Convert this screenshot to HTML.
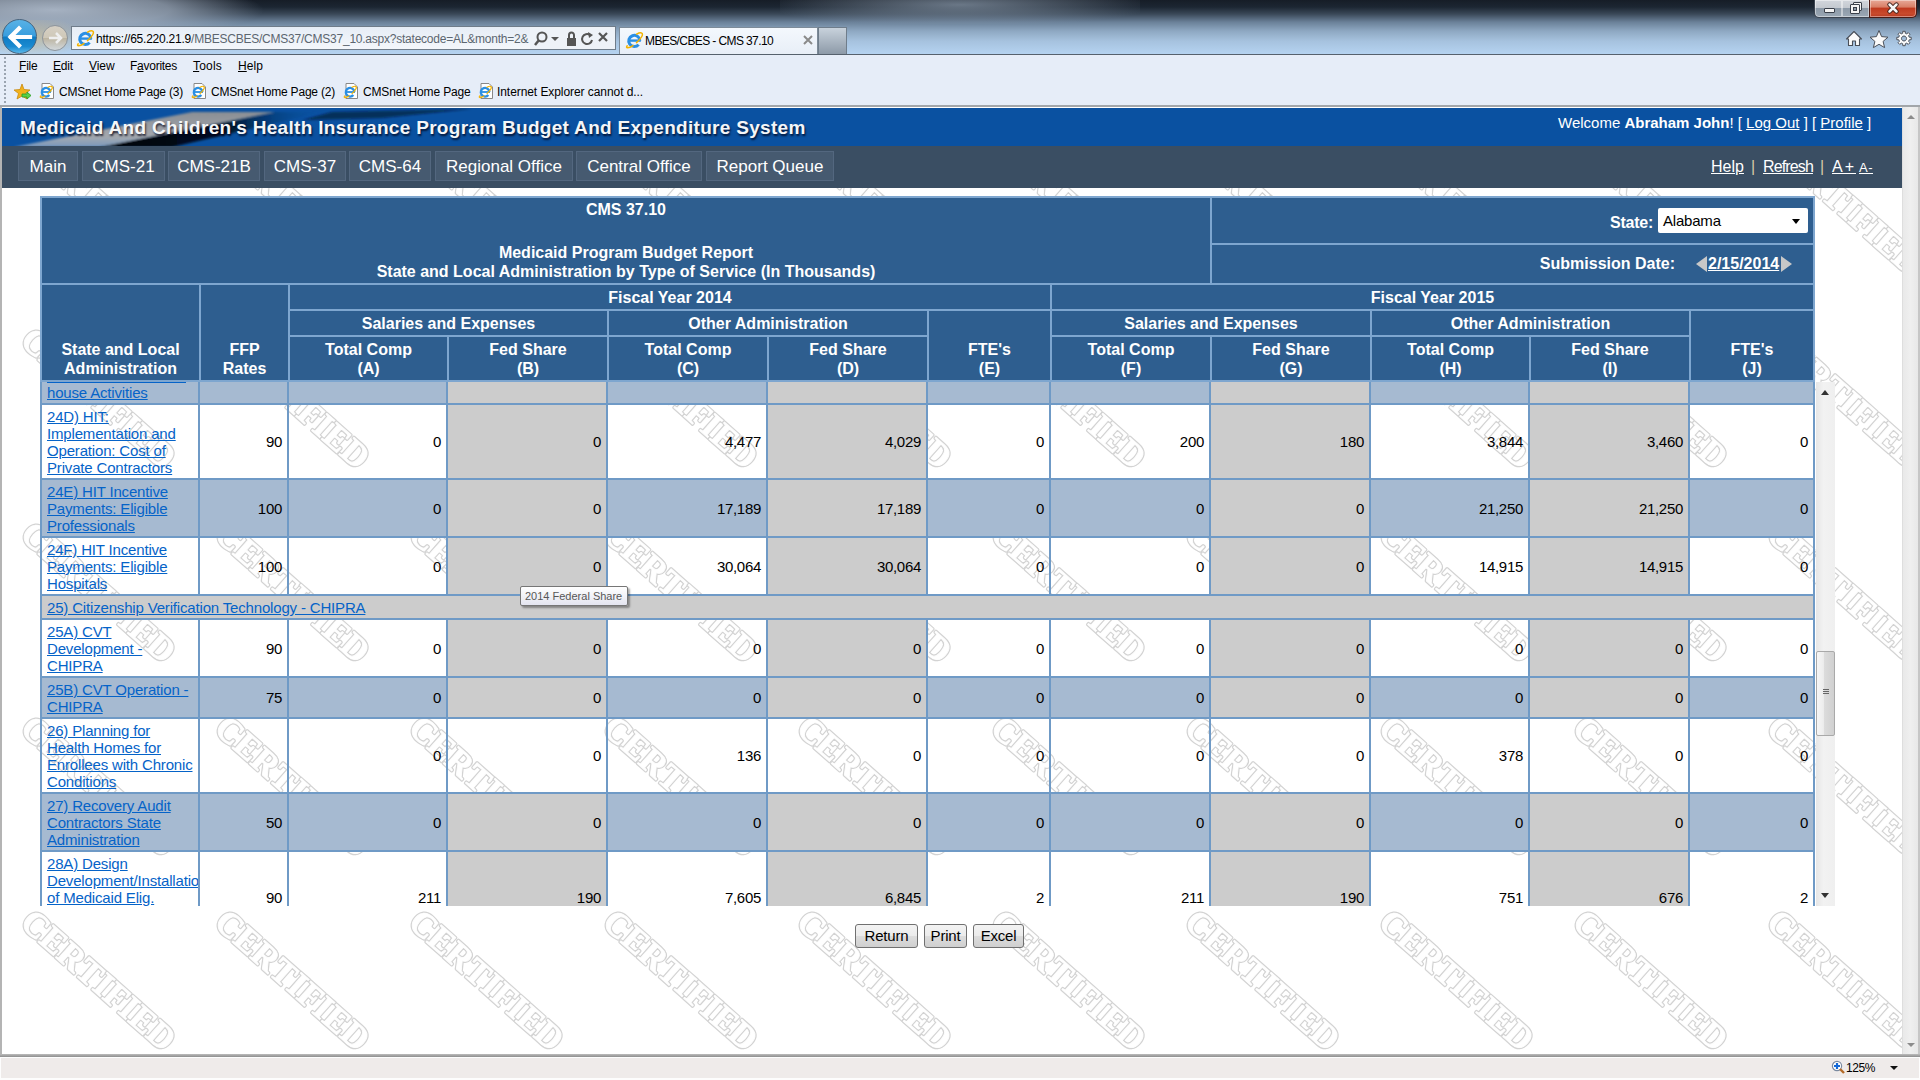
<!DOCTYPE html>
<html><head><meta charset="utf-8"><title>MBES/CBES - CMS 37.10</title>
<style>
html,body{margin:0;padding:0;}
body{width:1920px;height:1080px;overflow:hidden;position:relative;background:#fff;font-family:"Liberation Sans",sans-serif;}
body div{position:absolute;}
</style></head><body>
<div style="left:0px;top:0px;width:1920px;height:54px;background:linear-gradient(180deg,#161d27 0px,#1c2632 7px,#3a4858 14px,#6a8098 22px,#8ea8c2 31px,#a6c2de 41px,#b5d3f1 54px);"></div><div style="left:0px;top:0px;width:300px;height:40px;background:radial-gradient(ellipse 70% 75% at 18% 25%,rgba(172,184,200,.95),rgba(165,178,195,.7) 55%,rgba(150,160,175,0) 100%);"></div><div style="left:0px;top:20px;width:90px;height:34px;background:radial-gradient(ellipse 60% 60% at 35% 50%,rgba(205,190,150,.75),rgba(205,190,150,0) 100%);"></div><div style="left:780px;top:0px;width:360px;height:24px;background:radial-gradient(ellipse 55% 90% at 50% 20%,rgba(140,155,172,.7),rgba(140,155,172,0) 100%);"></div><div style="left:1814px;top:0px;width:29px;height:18px;background:linear-gradient(180deg,#d2d6dc 0,#c4c9d0 45%,#8d9aa8 50%,#9aa7b4 100%);border:1px solid #3c4450;border-top:none;border-radius:0 0 0 5px;box-sizing:border-box;box-shadow:inset 0 0 0 1px rgba(255,255,255,.45);"><div style="position:absolute;left:9px;top:8px;width:11px;height:5px;background:#f4f4f4;border:1px solid #3a404a;border-radius:1px;box-sizing:border-box"></div></div><div style="left:1842px;top:0px;width:28px;height:18px;background:linear-gradient(180deg,#d2d6dc 0,#c4c9d0 45%,#8d9aa8 50%,#9aa7b4 100%);border:1px solid #3c4450;border-top:none;border-left:none;box-sizing:border-box;box-shadow:inset 0 0 0 1px rgba(255,255,255,.45);"><div style="position:absolute;left:11px;top:2px;width:9px;height:9px;background:#f4f4f4;border:1px solid #3a404a;border-radius:1px;box-sizing:border-box"></div><div style="position:absolute;left:8px;top:4px;width:10px;height:10px;background:#f4f4f4;border:1px solid #3a404a;border-radius:1px;box-sizing:border-box"><div style="position:absolute;left:2px;top:2px;width:4px;height:4px;background:#8d9aa8;border:1px solid #3a404a;box-sizing:border-box"></div></div></div><div style="left:1869px;top:0px;width:48px;height:18px;background:linear-gradient(180deg,#e8a898 0,#d98068 40%,#c03a20 50%,#c84a2c 80%,#b83a22 100%);border:1px solid #4a1a14;border-top:none;border-radius:0 0 5px 0;box-sizing:border-box;box-shadow:inset 0 0 0 1px rgba(255,255,255,.4);"><svg width="48" height="18" style="position:absolute;left:-1px;top:0"><path d="M20.5 4.5 L27.5 11.5 M27.5 4.5 L20.5 11.5" stroke="#3a1a14" stroke-width="4.4" stroke-linecap="round"/><path d="M20.5 4.5 L27.5 11.5 M27.5 4.5 L20.5 11.5" stroke="#f6f6f6" stroke-width="2.5" stroke-linecap="round"/></svg></div><div style="left:2px;top:19px;width:35px;height:35px;border-radius:50%;background:linear-gradient(180deg,#58b2e6 0%,#3a9ede 48%,#0f7cc4 52%,#1a8ad0 80%,#5ab8ea 100%);border:1px solid #46637e;box-sizing:border-box;"><svg width="35" height="35" style="position:absolute;left:-1px;top:-1px"><path d="M8.5 18 L17 9.5 M8.5 18 L17 26.5 M9 18 L28 18" stroke="#fff" stroke-width="4.2" fill="none" stroke-linecap="square"/></svg></div><div style="left:42px;top:25px;width:26px;height:26px;border-radius:50%;background:linear-gradient(180deg,#d6d0c4,#cfc8b8 48%,#bdb5a2 52%,#d2d8dc);border:1px solid #8e959c;box-sizing:border-box;"><svg width="26" height="26" style="position:absolute;left:-1px;top:-1px"><path d="M7 13 L19 13 M14 8 L19 13 L14 18" stroke="#eeeeee" stroke-width="2.5" fill="none"/></svg></div><div style="left:71px;top:26px;width:545px;height:24px;background:linear-gradient(180deg,#e6edf6,#f4f7fb);border:1px solid #6f7c8a;box-sizing:border-box;"></div><svg width="20" height="20" style="position:absolute;left:75px;top:28px" viewBox="0 0 20 20"><path d="M15.9 10.6 A5.6 5.6 0 1 0 14.6 14.6" fill="none" stroke="#2a8fe4" stroke-width="3"/><path d="M5 10.6 H16.8" stroke="#2a8fe4" stroke-width="2.4"/><path d="M3.2 15.8 C1.2 18.4 4.5 18.6 9 15.6 M12.5 12.6 C17 9 19.6 4.4 17.8 3.2 C16.8 2.5 14.8 3 12.6 4.2" fill="none" stroke="#f3b300" stroke-width="1.5" stroke-linecap="round"/></svg><div style="position:absolute;left:96px;top:33px;font-size:12px;line-height:12px;color:#5c6670;white-space:nowrap;letter-spacing:-0.230px"><span style="color:#000">https://65.220.21.9</span>/MBESCBES/CMS37/CMS37_10.aspx?statecode=AL&amp;month=2&amp;</div><div style="left:530px;top:27px;width:85px;height:22px;background:#eef2f8;"></div><svg width="80" height="20" style="position:absolute;left:532px;top:29px"><circle cx="10" cy="8" r="4.5" stroke="#555" stroke-width="2" fill="none"/><path d="M7 11 L3 16" stroke="#555" stroke-width="2.5"/><path d="M19 8 L27 8 L23 12Z" fill="#555"/><rect x="35" y="9" width="9" height="8" fill="#555"/><path d="M37 9 V6 a2.5 2.5 0 0 1 5 0 V9" stroke="#555" stroke-width="2" fill="none"/><path d="M58 6 A5 5 0 1 0 60 11" stroke="#555" stroke-width="2" fill="none"/><path d="M56 3 L61 6 L57 9Z" fill="#555"/><path d="M67 4 L75 12 M75 4 L67 12" stroke="#555" stroke-width="2.2"/></svg><div style="left:619px;top:27px;width:199px;height:28px;background:linear-gradient(180deg,#f4f8fd,#e7eef7);border:1px solid #7d8b99;border-bottom:none;box-sizing:border-box;"></div><svg width="20" height="20" style="position:absolute;left:624px;top:30px" viewBox="0 0 20 20"><path d="M15.9 10.6 A5.6 5.6 0 1 0 14.6 14.6" fill="none" stroke="#2a8fe4" stroke-width="3"/><path d="M5 10.6 H16.8" stroke="#2a8fe4" stroke-width="2.4"/><path d="M3.2 15.8 C1.2 18.4 4.5 18.6 9 15.6 M12.5 12.6 C17 9 19.6 4.4 17.8 3.2 C16.8 2.5 14.8 3 12.6 4.2" fill="none" stroke="#f3b300" stroke-width="1.5" stroke-linecap="round"/></svg><div style="position:absolute;left:645px;top:35px;font-size:12px;line-height:12px;color:#000;white-space:nowrap;letter-spacing:-0.603px">MBES/CBES - CMS 37.10</div><svg width="10" height="10" style="position:absolute;left:803px;top:35px"><path d="M1 1 L9 9 M9 1 L1 9" stroke="#8a8a8a" stroke-width="2"/></svg><div style="left:818px;top:27px;width:29px;height:27px;background:linear-gradient(180deg,#c8d2dc,#8d9aa8);border:1px solid #6f7d8b;border-bottom:none;box-sizing:border-box;"></div><svg width="70" height="20" style="position:absolute;left:1844px;top:29px"><path d="M2.5 10 L10 2.5 L17.5 10 L15.5 10 V16.5 H11.5 V12 H8.5 V16.5 H4.5 V10Z" stroke="#4a4f58" stroke-width="1.1" fill="#fbfbfb" stroke-linejoin="round"/><path d="M35 1.5 L37.6 7.6 L44 8.2 L39.1 12.4 L40.6 18.6 L35 15.3 L29.4 18.6 L30.9 12.4 L26 8.2 L32.4 7.6Z" fill="#fbfbfb" stroke="#4a4f58" stroke-width="1" stroke-linejoin="round"/><path d="M65.24 8.20 L67.20 8.30 L67.20 10.70 L65.24 10.80 L64.63 12.29 L65.94 13.74 L64.24 15.44 L62.79 14.13 L61.30 14.74 L61.20 16.70 L58.80 16.70 L58.70 14.74 L57.21 14.13 L55.76 15.44 L54.06 13.74 L55.37 12.29 L54.76 10.80 L52.80 10.70 L52.80 8.30 L54.76 8.20 L55.37 6.71 L54.06 5.26 L55.76 3.56 L57.21 4.87 L58.70 4.26 L58.80 2.30 L61.20 2.30 L61.30 4.26 L62.79 4.87 L64.24 3.56 L65.94 5.26 L64.63 6.71Z M60 7 A2.5 2.5 0 1 0 60.01 7Z" fill="#fbfbfb" fill-rule="evenodd" stroke="#4a4f58" stroke-width="1" stroke-linejoin="round"/></svg><div style="left:0px;top:54px;width:1920px;height:1px;background:#56616d;"></div><div style="left:0px;top:55px;width:1920px;height:50px;background:#e6edf8;"></div><div style="position:absolute;left:4px;top:57px;width:2px;height:46px;background:repeating-linear-gradient(180deg,#9aa4b0 0 2px,transparent 2px 4px)"></div><div style="position:absolute;top:60px;font-size:12px;line-height:12px;color:#000;white-space:nowrap;left:19px;letter-spacing:-0.211px"><u>F</u>ile</div><div style="position:absolute;top:60px;font-size:12px;line-height:12px;color:#000;white-space:nowrap;left:53px;letter-spacing:-0.168px"><u>E</u>dit</div><div style="position:absolute;top:60px;font-size:12px;line-height:12px;color:#000;white-space:nowrap;left:89px;letter-spacing:-0.074px"><u>V</u>iew</div><div style="position:absolute;top:60px;font-size:12px;line-height:12px;color:#000;white-space:nowrap;left:130px;letter-spacing:-0.260px">F<u>a</u>vorites</div><div style="position:absolute;top:60px;font-size:12px;line-height:12px;color:#000;white-space:nowrap;left:193px;letter-spacing:0.197px"><u>T</u>ools</div><div style="position:absolute;top:60px;font-size:12px;line-height:12px;color:#000;white-space:nowrap;left:238px;letter-spacing:0.078px"><u>H</u>elp</div><svg width="18" height="18" style="position:absolute;left:14px;top:83px"><path d="M8 1 L10 6.5 L16 7 L11.5 10.5 L13 16 L8 13 L3 16 L4.5 10.5 L0 7 L6 6.5Z" fill="#f3b21a" stroke="#c88a10" stroke-width="0.8"/><path d="M8 11 H13 V9 L17 12.5 L13 16 V14 H8Z" fill="#5ad24a" stroke="#2a9a20" stroke-width="0.8"/></svg><svg width="18" height="18" style="position:absolute;left:38px;top:82px"><path d="M4 1.5 H12 L15.5 5 V16.5 H4Z" fill="#fff" stroke="#888" stroke-width="1"/><path d="M12.4 10 A4.3 4.3 0 1 0 11.4 13" fill="none" stroke="#2a8fe4" stroke-width="2.3"/><path d="M4.2 10 H13" stroke="#2a8fe4" stroke-width="1.8"/><path d="M2.6 14 C1.2 16 3.6 16.2 7 14 M10 11.6 C13.4 8.8 15.2 5.4 13.8 4.5 C13 4 11.6 4.4 10 5.3" fill="none" stroke="#f3b300" stroke-width="1.2" stroke-linecap="round"/></svg><div style="position:absolute;top:86px;font-size:12px;line-height:12px;color:#000;white-space:nowrap;left:59px;letter-spacing:-0.202px">CMSnet Home Page (3)</div><svg width="18" height="18" style="position:absolute;left:190px;top:82px"><path d="M4 1.5 H12 L15.5 5 V16.5 H4Z" fill="#fff" stroke="#888" stroke-width="1"/><path d="M12.4 10 A4.3 4.3 0 1 0 11.4 13" fill="none" stroke="#2a8fe4" stroke-width="2.3"/><path d="M4.2 10 H13" stroke="#2a8fe4" stroke-width="1.8"/><path d="M2.6 14 C1.2 16 3.6 16.2 7 14 M10 11.6 C13.4 8.8 15.2 5.4 13.8 4.5 C13 4 11.6 4.4 10 5.3" fill="none" stroke="#f3b300" stroke-width="1.2" stroke-linecap="round"/></svg><div style="position:absolute;top:86px;font-size:12px;line-height:12px;color:#000;white-space:nowrap;left:211px;letter-spacing:-0.202px">CMSnet Home Page (2)</div><svg width="18" height="18" style="position:absolute;left:342px;top:82px"><path d="M4 1.5 H12 L15.5 5 V16.5 H4Z" fill="#fff" stroke="#888" stroke-width="1"/><path d="M12.4 10 A4.3 4.3 0 1 0 11.4 13" fill="none" stroke="#2a8fe4" stroke-width="2.3"/><path d="M4.2 10 H13" stroke="#2a8fe4" stroke-width="1.8"/><path d="M2.6 14 C1.2 16 3.6 16.2 7 14 M10 11.6 C13.4 8.8 15.2 5.4 13.8 4.5 C13 4 11.6 4.4 10 5.3" fill="none" stroke="#f3b300" stroke-width="1.2" stroke-linecap="round"/></svg><div style="position:absolute;top:86px;font-size:12px;line-height:12px;color:#000;white-space:nowrap;left:363px;letter-spacing:-0.158px">CMSnet Home Page</div><svg width="18" height="18" style="position:absolute;left:477px;top:82px"><path d="M4 1.5 H12 L15.5 5 V16.5 H4Z" fill="#fff" stroke="#888" stroke-width="1"/><path d="M12.4 10 A4.3 4.3 0 1 0 11.4 13" fill="none" stroke="#2a8fe4" stroke-width="2.3"/><path d="M4.2 10 H13" stroke="#2a8fe4" stroke-width="1.8"/><path d="M2.6 14 C1.2 16 3.6 16.2 7 14 M10 11.6 C13.4 8.8 15.2 5.4 13.8 4.5 C13 4 11.6 4.4 10 5.3" fill="none" stroke="#f3b300" stroke-width="1.2" stroke-linecap="round"/></svg><div style="position:absolute;top:86px;font-size:12px;line-height:12px;color:#000;white-space:nowrap;left:497px;letter-spacing:-0.070px">Internet Explorer cannot d...</div><div style="left:0px;top:105px;width:1920px;height:2px;background:#a2a6aa;"></div><div style="left:0px;top:107px;width:2px;height:947px;background:#b4b4b4;"></div><div style="left:0px;top:1054px;width:1920px;height:3px;background:linear-gradient(180deg,#bcbcbc,#8e8e8e);"></div><div style="left:0px;top:1057px;width:1920px;height:23px;background:#fdfdfd;"></div><div style="left:1px;top:1058px;width:1918px;height:20px;background:#efebea;"></div><svg width="16" height="16" style="position:absolute;left:1831px;top:1060px"><circle cx="6" cy="6" r="4.6" fill="#fff" stroke="#7a8aa0" stroke-width="1.2"/><path d="M6 3 V9 M3 6 H9" stroke="#1469d8" stroke-width="2.2"/><path d="M9 9 L13 13" stroke="#b46a28" stroke-width="2.4"/></svg><div style="position:absolute;left:1846px;top:1062px;font-size:12px;line-height:12px;color:#000;letter-spacing:-0.422px">125%</div><div style="position:absolute;left:1890px;top:1066px;width:0;height:0;border-left:4px solid transparent;border-right:4px solid transparent;border-top:4px solid #111"></div><div style="left:1902px;top:107px;width:18px;height:947px;background:linear-gradient(90deg,#e9e9e9,#efefef 50%,#e8e8e8);border-left:1px solid #dedede;border-right:2px solid #c6c6c6;box-sizing:border-box;"></div><div style="position:absolute;left:1907px;top:115px;width:0;height:0;border-left:4px solid transparent;border-right:4px solid transparent;border-bottom:4px solid #8c8c8c"></div><div style="position:absolute;left:1907px;top:1043px;width:0;height:0;border-left:4px solid transparent;border-right:4px solid transparent;border-top:4px solid #8c8c8c"></div><svg width="1920" height="1080" style="position:absolute;left:0;top:0"><defs><pattern id="wm" patternUnits="userSpaceOnUse" x="2" y="107" width="194" height="194"><g transform="translate(97,97) rotate(41.5) translate(0,12)" font-family="Liberation Serif" font-weight="bold" font-size="35"><text x="-96.63" y="0" fill="#d3d3d3" stroke="#d3d3d3" stroke-width="3.3" stroke-linejoin="round">C</text><text x="-96.63" y="0" fill="#ffffff" stroke="#ffffff" stroke-width="0.80" stroke-linejoin="round">C</text><text x="-71.55" y="0" fill="#d3d3d3" stroke="#d3d3d3" stroke-width="3.3" stroke-linejoin="round">E</text><text x="-71.55" y="0" fill="#ffffff" stroke="#ffffff" stroke-width="0.80" stroke-linejoin="round">E</text><text x="-48.41" y="0" fill="#d3d3d3" stroke="#d3d3d3" stroke-width="3.3" stroke-linejoin="round">R</text><text x="-48.41" y="0" fill="#ffffff" stroke="#ffffff" stroke-width="0.80" stroke-linejoin="round">R</text><text x="-23.33" y="0" fill="#d3d3d3" stroke="#d3d3d3" stroke-width="3.3" stroke-linejoin="round">T</text><text x="-23.33" y="0" fill="#ffffff" stroke="#ffffff" stroke-width="0.80" stroke-linejoin="round">T</text><text x="-0.18" y="0" fill="#d3d3d3" stroke="#d3d3d3" stroke-width="3.3" stroke-linejoin="round">I</text><text x="-0.18" y="0" fill="#ffffff" stroke="#ffffff" stroke-width="0.80" stroke-linejoin="round">I</text><text x="13.24" y="0" fill="#d3d3d3" stroke="#d3d3d3" stroke-width="3.3" stroke-linejoin="round">F</text><text x="13.24" y="0" fill="#ffffff" stroke="#ffffff" stroke-width="0.80" stroke-linejoin="round">F</text><text x="34.42" y="0" fill="#d3d3d3" stroke="#d3d3d3" stroke-width="3.3" stroke-linejoin="round">I</text><text x="34.42" y="0" fill="#ffffff" stroke="#ffffff" stroke-width="0.80" stroke-linejoin="round">I</text><text x="47.84" y="0" fill="#d3d3d3" stroke="#d3d3d3" stroke-width="3.3" stroke-linejoin="round">E</text><text x="47.84" y="0" fill="#ffffff" stroke="#ffffff" stroke-width="0.80" stroke-linejoin="round">E</text><text x="70.99" y="0" fill="#d3d3d3" stroke="#d3d3d3" stroke-width="3.3" stroke-linejoin="round">D</text><text x="70.99" y="0" fill="#ffffff" stroke="#ffffff" stroke-width="0.80" stroke-linejoin="round">D</text></g></pattern></defs><rect x="2" y="107" width="1900" height="947" fill="url(#wm)"/></svg><div style="left:2px;top:108px;width:1900px;height:38px;background:#0a51a1;overflow:hidden;"><svg width="1900" height="38" style="position:absolute;left:0;top:0"><defs><linearGradient id="sg" x1="0" y1="0" x2="0" y2="1"><stop offset="0" stop-color="#8a8e94"/><stop offset="0.7" stop-color="#a4a8ae"/><stop offset="1" stop-color="#c0c4ca" stop-opacity="0.6"/></linearGradient><linearGradient id="sd" x1="0" y1="0" x2="1" y2="0"><stop offset="0" stop-color="#000" stop-opacity="0.95"/><stop offset="0.55" stop-color="#02060c" stop-opacity="0.85"/><stop offset="1" stop-color="#0a51a1" stop-opacity="0"/></linearGradient><linearGradient id="sl" x1="0" y1="0" x2="1" y2="0"><stop offset="0" stop-color="#0a51a1" stop-opacity="0"/><stop offset="1" stop-color="#0a51a1" stop-opacity="0"/></linearGradient></defs><filter id="bl" x="-10%" y="-50%" width="120%" height="200%"><feGaussianBlur stdDeviation="1.2"/></filter><g filter="url(#bl)"><path d="M190 4 L273 4 L98 39 L12 39Z" fill="url(#sg)"/><path d="M98 39 L273 4 L322 4 L170 39Z" fill="url(#sd)"/><path d="M300 12 L330 4 L470 1 L380 10Z" fill="#02101f" opacity="0.55"/></g></svg><div style="position:absolute;left:18px;top:9px;font-size:19px;line-height:22px;font-weight:bold;color:#f4f6f8;letter-spacing:0.3px;white-space:nowrap;text-shadow:1px 2px 2px rgba(0,0,20,.75)">Medicaid And Children's Health Insurance Program Budget And Expenditure System</div><div style="position:absolute;left:1556px;top:6px;font-size:15px;line-height:18px;color:#fff;white-space:nowrap">Welcome <b>Abraham John</b>! [ <u>Log Out</u> ] [ <u>Profile</u> ]</div></div><div style="left:2px;top:146px;width:1900px;height:42px;background:#3a4e63;"></div><div style="position:absolute;top:151px;height:30px;background:#465a70;border:1px solid #53677f;box-sizing:border-box;color:#fff;font-size:17px;line-height:30px;text-align:center;white-space:nowrap;left:18px;width:60px">Main</div><div style="position:absolute;top:151px;height:30px;background:#465a70;border:1px solid #53677f;box-sizing:border-box;color:#fff;font-size:17px;line-height:30px;text-align:center;white-space:nowrap;left:82px;width:83px">CMS-21</div><div style="position:absolute;top:151px;height:30px;background:#465a70;border:1px solid #53677f;box-sizing:border-box;color:#fff;font-size:17px;line-height:30px;text-align:center;white-space:nowrap;left:168px;width:92px">CMS-21B</div><div style="position:absolute;top:151px;height:30px;background:#465a70;border:1px solid #53677f;box-sizing:border-box;color:#fff;font-size:17px;line-height:30px;text-align:center;white-space:nowrap;left:264px;width:82px">CMS-37</div><div style="position:absolute;top:151px;height:30px;background:#465a70;border:1px solid #53677f;box-sizing:border-box;color:#fff;font-size:17px;line-height:30px;text-align:center;white-space:nowrap;left:349px;width:82px">CMS-64</div><div style="position:absolute;top:151px;height:30px;background:#465a70;border:1px solid #53677f;box-sizing:border-box;color:#fff;font-size:17px;line-height:30px;text-align:center;white-space:nowrap;left:435px;width:138px">Regional Office</div><div style="position:absolute;top:151px;height:30px;background:#465a70;border:1px solid #53677f;box-sizing:border-box;color:#fff;font-size:17px;line-height:30px;text-align:center;white-space:nowrap;left:576px;width:126px">Central Office</div><div style="position:absolute;top:151px;height:30px;background:#465a70;border:1px solid #53677f;box-sizing:border-box;color:#fff;font-size:17px;line-height:30px;text-align:center;white-space:nowrap;left:706px;width:128px">Report Queue</div><div style="position:absolute;top:159px;font-size:16px;line-height:16px;color:#fff;white-space:nowrap;left:1711px;letter-spacing:0.016px"><u>Help</u></div><div style="position:absolute;top:159px;font-size:16px;line-height:16px;color:#fff;white-space:nowrap;left:1763px;letter-spacing:-0.866px"><u>Refresh</u></div><div style="position:absolute;top:159px;font-size:16px;line-height:16px;color:#fff;white-space:nowrap;left:1832px;letter-spacing:1.992px"><u>A+</u></div><div style="position:absolute;top:159px;font-size:16px;line-height:16px;color:#fff;white-space:nowrap;left:1751px;color:#d8c8a8">|</div><div style="position:absolute;top:159px;font-size:16px;line-height:16px;color:#fff;white-space:nowrap;left:1820px;color:#d8c8a8">|</div><div style="position:absolute;top:159px;font-size:16px;line-height:16px;color:#fff;white-space:nowrap;left:1859px;top:161px;font-size:13px;line-height:13px;letter-spacing:0.500px"><u>A-</u></div><div style="left:40px;top:196px;width:1775px;height:186px;background:#7ea6cf"></div><div style="left:42px;top:198px;width:1168px;height:85px;background:#2e5e8f;"></div><div style="left:1212px;top:198px;width:601px;height:45px;background:#2e5e8f;"></div><div style="left:1212px;top:245px;width:601px;height:38px;background:#2e5e8f;"></div><div style="left:42px;top:285px;width:157px;height:95px;background:#2e5e8f;"></div><div style="left:201px;top:285px;width:87px;height:95px;background:#2e5e8f;"></div><div style="left:290px;top:285px;width:760px;height:24px;background:#2e5e8f;"></div><div style="left:1052px;top:285px;width:761px;height:24px;background:#2e5e8f;"></div><div style="left:290px;top:311px;width:317px;height:24px;background:#2e5e8f;"></div><div style="left:609px;top:311px;width:318px;height:24px;background:#2e5e8f;"></div><div style="left:929px;top:311px;width:121px;height:69px;background:#2e5e8f;"></div><div style="left:1052px;top:311px;width:318px;height:24px;background:#2e5e8f;"></div><div style="left:1372px;top:311px;width:317px;height:24px;background:#2e5e8f;"></div><div style="left:1691px;top:311px;width:122px;height:69px;background:#2e5e8f;"></div><div style="left:290px;top:337px;width:157px;height:43px;background:#2e5e8f;"></div><div style="left:449px;top:337px;width:158px;height:43px;background:#2e5e8f;"></div><div style="left:609px;top:337px;width:158px;height:43px;background:#2e5e8f;"></div><div style="left:769px;top:337px;width:158px;height:43px;background:#2e5e8f;"></div><div style="left:1052px;top:337px;width:158px;height:43px;background:#2e5e8f;"></div><div style="left:1212px;top:337px;width:158px;height:43px;background:#2e5e8f;"></div><div style="left:1372px;top:337px;width:157px;height:43px;background:#2e5e8f;"></div><div style="left:1531px;top:337px;width:158px;height:43px;background:#2e5e8f;"></div><div style="position:absolute;color:#fff;font-weight:bold;font-size:16px;line-height:19px;text-align:center;white-space:nowrap;left:42px;top:200px;width:1168px">CMS 37.10</div><div style="position:absolute;color:#fff;font-weight:bold;font-size:16px;line-height:19px;text-align:center;white-space:nowrap;left:42px;top:243px;width:1168px">Medicaid Program Budget Report</div><div style="position:absolute;color:#fff;font-weight:bold;font-size:16px;line-height:19px;text-align:center;white-space:nowrap;left:42px;top:262px;width:1168px">State and Local Administration by Type of Service (In Thousands)</div><div style="position:absolute;color:#fff;font-weight:bold;font-size:16px;line-height:19px;text-align:center;white-space:nowrap;left:290px;top:288px;width:760px">Fiscal Year 2014</div><div style="position:absolute;color:#fff;font-weight:bold;font-size:16px;line-height:19px;text-align:center;white-space:nowrap;left:1052px;top:288px;width:761px">Fiscal Year 2015</div><div style="position:absolute;color:#fff;font-weight:bold;font-size:16px;line-height:19px;text-align:center;white-space:nowrap;left:290px;top:314px;width:317px">Salaries and Expenses</div><div style="position:absolute;color:#fff;font-weight:bold;font-size:16px;line-height:19px;text-align:center;white-space:nowrap;left:609px;top:314px;width:318px">Other Administration</div><div style="position:absolute;color:#fff;font-weight:bold;font-size:16px;line-height:19px;text-align:center;white-space:nowrap;left:1052px;top:314px;width:318px">Salaries and Expenses</div><div style="position:absolute;color:#fff;font-weight:bold;font-size:16px;line-height:19px;text-align:center;white-space:nowrap;left:1372px;top:314px;width:317px">Other Administration</div><div style="position:absolute;color:#fff;font-weight:bold;font-size:16px;line-height:19px;text-align:center;white-space:nowrap;left:42px;top:340px;width:157px">State and Local<br>Administration</div><div style="position:absolute;color:#fff;font-weight:bold;font-size:16px;line-height:19px;text-align:center;white-space:nowrap;left:201px;top:340px;width:87px">FFP<br>Rates</div><div style="position:absolute;color:#fff;font-weight:bold;font-size:16px;line-height:19px;text-align:center;white-space:nowrap;left:290px;top:340px;width:157px">Total Comp<br>(A)</div><div style="position:absolute;color:#fff;font-weight:bold;font-size:16px;line-height:19px;text-align:center;white-space:nowrap;left:449px;top:340px;width:158px">Fed Share<br>(B)</div><div style="position:absolute;color:#fff;font-weight:bold;font-size:16px;line-height:19px;text-align:center;white-space:nowrap;left:609px;top:340px;width:158px">Total Comp<br>(C)</div><div style="position:absolute;color:#fff;font-weight:bold;font-size:16px;line-height:19px;text-align:center;white-space:nowrap;left:769px;top:340px;width:158px">Fed Share<br>(D)</div><div style="position:absolute;color:#fff;font-weight:bold;font-size:16px;line-height:19px;text-align:center;white-space:nowrap;left:929px;top:340px;width:121px">FTE's<br>(E)</div><div style="position:absolute;color:#fff;font-weight:bold;font-size:16px;line-height:19px;text-align:center;white-space:nowrap;left:1052px;top:340px;width:158px">Total Comp<br>(F)</div><div style="position:absolute;color:#fff;font-weight:bold;font-size:16px;line-height:19px;text-align:center;white-space:nowrap;left:1212px;top:340px;width:158px">Fed Share<br>(G)</div><div style="position:absolute;color:#fff;font-weight:bold;font-size:16px;line-height:19px;text-align:center;white-space:nowrap;left:1372px;top:340px;width:157px">Total Comp<br>(H)</div><div style="position:absolute;color:#fff;font-weight:bold;font-size:16px;line-height:19px;text-align:center;white-space:nowrap;left:1531px;top:340px;width:158px">Fed Share<br>(I)</div><div style="position:absolute;color:#fff;font-weight:bold;font-size:16px;line-height:19px;text-align:center;white-space:nowrap;left:1691px;top:340px;width:122px">FTE's<br>(J)</div><div style="position:absolute;color:#fff;font-weight:bold;font-size:16px;line-height:19px;text-align:center;white-space:nowrap;left:1560px;top:213px;width:93px;text-align:right;letter-spacing:-0.25px">State:</div><div style="left:1658px;top:208px;width:150px;height:25px;background:#fff;border-radius:2px;"><div style="position:absolute;left:5px;top:4px;font-size:15px;line-height:17px;color:#000;white-space:nowrap;letter-spacing:-0.2px">Alabama</div><div style="position:absolute;left:134px;top:11px;width:0;height:0;border-left:4px solid transparent;border-right:4px solid transparent;border-top:5px solid #000"></div></div><div style="position:absolute;color:#fff;font-weight:bold;font-size:16px;line-height:19px;text-align:center;white-space:nowrap;left:1500px;top:254px;width:175px;text-align:right">Submission Date:</div><div style="position:absolute;left:1696px;top:256px;width:0;height:0;border-top:8px solid transparent;border-bottom:8px solid transparent;border-right:11px solid #c8c8c8"></div><div style="position:absolute;left:1781px;top:256px;width:0;height:0;border-top:8px solid transparent;border-bottom:8px solid transparent;border-left:11px solid #c8c8c8"></div><div style="position:absolute;color:#fff;font-weight:bold;font-size:16px;line-height:19px;text-align:center;white-space:nowrap;left:1708px;top:254px;width:72px;text-align:left;text-decoration:underline">2/15/2014</div><div id="sb" style="left:40px;top:382px;width:1775px;height:524px;overflow:hidden;"><div style="position:relative;left:-40px;top:-382px;width:1920px;height:1080px"><div style="left:40px;top:403px;width:1775px;height:2px;background:#6f9ac6"></div><div style="left:42px;top:382px;width:156px;height:21px;background:#a6bad1"></div><div style="left:200px;top:382px;width:87px;height:21px;background:#a6bad1"></div><div style="left:289px;top:382px;width:157px;height:21px;background:#a6bad1"></div><div style="left:448px;top:382px;width:158px;height:21px;background:#cccccc"></div><div style="left:608px;top:382px;width:158px;height:21px;background:#a6bad1"></div><div style="left:768px;top:382px;width:158px;height:21px;background:#cccccc"></div><div style="left:928px;top:382px;width:121px;height:21px;background:#a6bad1"></div><div style="left:1051px;top:382px;width:158px;height:21px;background:#a6bad1"></div><div style="left:1211px;top:382px;width:158px;height:21px;background:#cccccc"></div><div style="left:1371px;top:382px;width:157px;height:21px;background:#a6bad1"></div><div style="left:1530px;top:382px;width:158px;height:21px;background:#cccccc"></div><div style="left:1690px;top:382px;width:123px;height:21px;background:#a6bad1"></div><div style="left:47px;top:382px;width:139px;height:1px;background:#0563c8"></div><div style="position:absolute;font-size:15px;line-height:17px;white-space:nowrap;left:47px;top:384px;color:#0563c8;text-decoration:underline;letter-spacing:-0.17px">house Activities</div><div style="left:40px;top:478px;width:1775px;height:2px;background:#6f9ac6"></div><div style="left:448px;top:405px;width:158px;height:73px;background:#cccccc"></div><div style="left:768px;top:405px;width:158px;height:73px;background:#cccccc"></div><div style="left:1211px;top:405px;width:158px;height:73px;background:#cccccc"></div><div style="left:1530px;top:405px;width:158px;height:73px;background:#cccccc"></div><div style="position:absolute;font-size:15px;line-height:17px;white-space:nowrap;left:47px;top:408px;color:#0563c8;text-decoration:underline;letter-spacing:-0.17px">24D) HIT:<br>Implementation and<br>Operation: Cost of<br>Private Contractors</div><div style="position:absolute;font-size:15px;line-height:17px;white-space:nowrap;left:162px;width:120px;text-align:right;top:433px;color:#000;letter-spacing:-0.3px">90</div><div style="position:absolute;font-size:15px;line-height:17px;white-space:nowrap;left:321px;width:120px;text-align:right;top:433px;color:#000;letter-spacing:-0.3px">0</div><div style="position:absolute;font-size:15px;line-height:17px;white-space:nowrap;left:481px;width:120px;text-align:right;top:433px;color:#000;letter-spacing:-0.3px">0</div><div style="position:absolute;font-size:15px;line-height:17px;white-space:nowrap;left:641px;width:120px;text-align:right;top:433px;color:#000;letter-spacing:-0.3px">4,477</div><div style="position:absolute;font-size:15px;line-height:17px;white-space:nowrap;left:801px;width:120px;text-align:right;top:433px;color:#000;letter-spacing:-0.3px">4,029</div><div style="position:absolute;font-size:15px;line-height:17px;white-space:nowrap;left:924px;width:120px;text-align:right;top:433px;color:#000;letter-spacing:-0.3px">0</div><div style="position:absolute;font-size:15px;line-height:17px;white-space:nowrap;left:1084px;width:120px;text-align:right;top:433px;color:#000;letter-spacing:-0.3px">200</div><div style="position:absolute;font-size:15px;line-height:17px;white-space:nowrap;left:1244px;width:120px;text-align:right;top:433px;color:#000;letter-spacing:-0.3px">180</div><div style="position:absolute;font-size:15px;line-height:17px;white-space:nowrap;left:1403px;width:120px;text-align:right;top:433px;color:#000;letter-spacing:-0.3px">3,844</div><div style="position:absolute;font-size:15px;line-height:17px;white-space:nowrap;left:1563px;width:120px;text-align:right;top:433px;color:#000;letter-spacing:-0.3px">3,460</div><div style="position:absolute;font-size:15px;line-height:17px;white-space:nowrap;left:1688px;width:120px;text-align:right;top:433px;color:#000;letter-spacing:-0.3px">0</div><div style="left:40px;top:536px;width:1775px;height:2px;background:#6f9ac6"></div><div style="left:42px;top:480px;width:156px;height:56px;background:#a6bad1"></div><div style="left:200px;top:480px;width:87px;height:56px;background:#a6bad1"></div><div style="left:289px;top:480px;width:157px;height:56px;background:#a6bad1"></div><div style="left:448px;top:480px;width:158px;height:56px;background:#cccccc"></div><div style="left:608px;top:480px;width:158px;height:56px;background:#a6bad1"></div><div style="left:768px;top:480px;width:158px;height:56px;background:#cccccc"></div><div style="left:928px;top:480px;width:121px;height:56px;background:#a6bad1"></div><div style="left:1051px;top:480px;width:158px;height:56px;background:#a6bad1"></div><div style="left:1211px;top:480px;width:158px;height:56px;background:#cccccc"></div><div style="left:1371px;top:480px;width:157px;height:56px;background:#a6bad1"></div><div style="left:1530px;top:480px;width:158px;height:56px;background:#cccccc"></div><div style="left:1690px;top:480px;width:123px;height:56px;background:#a6bad1"></div><div style="position:absolute;font-size:15px;line-height:17px;white-space:nowrap;left:47px;top:483px;color:#0563c8;text-decoration:underline;letter-spacing:-0.17px">24E) HIT Incentive<br>Payments: Eligible<br>Professionals</div><div style="position:absolute;font-size:15px;line-height:17px;white-space:nowrap;left:162px;width:120px;text-align:right;top:500px;color:#000;letter-spacing:-0.3px">100</div><div style="position:absolute;font-size:15px;line-height:17px;white-space:nowrap;left:321px;width:120px;text-align:right;top:500px;color:#000;letter-spacing:-0.3px">0</div><div style="position:absolute;font-size:15px;line-height:17px;white-space:nowrap;left:481px;width:120px;text-align:right;top:500px;color:#000;letter-spacing:-0.3px">0</div><div style="position:absolute;font-size:15px;line-height:17px;white-space:nowrap;left:641px;width:120px;text-align:right;top:500px;color:#000;letter-spacing:-0.3px">17,189</div><div style="position:absolute;font-size:15px;line-height:17px;white-space:nowrap;left:801px;width:120px;text-align:right;top:500px;color:#000;letter-spacing:-0.3px">17,189</div><div style="position:absolute;font-size:15px;line-height:17px;white-space:nowrap;left:924px;width:120px;text-align:right;top:500px;color:#000;letter-spacing:-0.3px">0</div><div style="position:absolute;font-size:15px;line-height:17px;white-space:nowrap;left:1084px;width:120px;text-align:right;top:500px;color:#000;letter-spacing:-0.3px">0</div><div style="position:absolute;font-size:15px;line-height:17px;white-space:nowrap;left:1244px;width:120px;text-align:right;top:500px;color:#000;letter-spacing:-0.3px">0</div><div style="position:absolute;font-size:15px;line-height:17px;white-space:nowrap;left:1403px;width:120px;text-align:right;top:500px;color:#000;letter-spacing:-0.3px">21,250</div><div style="position:absolute;font-size:15px;line-height:17px;white-space:nowrap;left:1563px;width:120px;text-align:right;top:500px;color:#000;letter-spacing:-0.3px">21,250</div><div style="position:absolute;font-size:15px;line-height:17px;white-space:nowrap;left:1688px;width:120px;text-align:right;top:500px;color:#000;letter-spacing:-0.3px">0</div><div style="left:40px;top:594px;width:1775px;height:2px;background:#6f9ac6"></div><div style="left:448px;top:538px;width:158px;height:56px;background:#cccccc"></div><div style="left:768px;top:538px;width:158px;height:56px;background:#cccccc"></div><div style="left:1211px;top:538px;width:158px;height:56px;background:#cccccc"></div><div style="left:1530px;top:538px;width:158px;height:56px;background:#cccccc"></div><div style="position:absolute;font-size:15px;line-height:17px;white-space:nowrap;left:47px;top:541px;color:#0563c8;text-decoration:underline;letter-spacing:-0.17px">24F) HIT Incentive<br>Payments: Eligible<br>Hospitals</div><div style="position:absolute;font-size:15px;line-height:17px;white-space:nowrap;left:162px;width:120px;text-align:right;top:558px;color:#000;letter-spacing:-0.3px">100</div><div style="position:absolute;font-size:15px;line-height:17px;white-space:nowrap;left:321px;width:120px;text-align:right;top:558px;color:#000;letter-spacing:-0.3px">0</div><div style="position:absolute;font-size:15px;line-height:17px;white-space:nowrap;left:481px;width:120px;text-align:right;top:558px;color:#000;letter-spacing:-0.3px">0</div><div style="position:absolute;font-size:15px;line-height:17px;white-space:nowrap;left:641px;width:120px;text-align:right;top:558px;color:#000;letter-spacing:-0.3px">30,064</div><div style="position:absolute;font-size:15px;line-height:17px;white-space:nowrap;left:801px;width:120px;text-align:right;top:558px;color:#000;letter-spacing:-0.3px">30,064</div><div style="position:absolute;font-size:15px;line-height:17px;white-space:nowrap;left:924px;width:120px;text-align:right;top:558px;color:#000;letter-spacing:-0.3px">0</div><div style="position:absolute;font-size:15px;line-height:17px;white-space:nowrap;left:1084px;width:120px;text-align:right;top:558px;color:#000;letter-spacing:-0.3px">0</div><div style="position:absolute;font-size:15px;line-height:17px;white-space:nowrap;left:1244px;width:120px;text-align:right;top:558px;color:#000;letter-spacing:-0.3px">0</div><div style="position:absolute;font-size:15px;line-height:17px;white-space:nowrap;left:1403px;width:120px;text-align:right;top:558px;color:#000;letter-spacing:-0.3px">14,915</div><div style="position:absolute;font-size:15px;line-height:17px;white-space:nowrap;left:1563px;width:120px;text-align:right;top:558px;color:#000;letter-spacing:-0.3px">14,915</div><div style="position:absolute;font-size:15px;line-height:17px;white-space:nowrap;left:1688px;width:120px;text-align:right;top:558px;color:#000;letter-spacing:-0.3px">0</div><div style="left:40px;top:618px;width:1775px;height:2px;background:#6f9ac6"></div><div style="left:42px;top:596px;width:1771px;height:22px;background:#cccccc"></div><div style="position:absolute;font-size:15px;line-height:17px;white-space:nowrap;left:47px;top:599px;color:#0563c8;text-decoration:underline;letter-spacing:-0.17px">25) Citizenship Verification Technology - CHIPRA</div><div style="left:40px;top:676px;width:1775px;height:2px;background:#6f9ac6"></div><div style="left:448px;top:620px;width:158px;height:56px;background:#cccccc"></div><div style="left:768px;top:620px;width:158px;height:56px;background:#cccccc"></div><div style="left:1211px;top:620px;width:158px;height:56px;background:#cccccc"></div><div style="left:1530px;top:620px;width:158px;height:56px;background:#cccccc"></div><div style="position:absolute;font-size:15px;line-height:17px;white-space:nowrap;left:47px;top:623px;color:#0563c8;text-decoration:underline;letter-spacing:-0.17px">25A) CVT<br>Development -<br>CHIPRA</div><div style="position:absolute;font-size:15px;line-height:17px;white-space:nowrap;left:162px;width:120px;text-align:right;top:640px;color:#000;letter-spacing:-0.3px">90</div><div style="position:absolute;font-size:15px;line-height:17px;white-space:nowrap;left:321px;width:120px;text-align:right;top:640px;color:#000;letter-spacing:-0.3px">0</div><div style="position:absolute;font-size:15px;line-height:17px;white-space:nowrap;left:481px;width:120px;text-align:right;top:640px;color:#000;letter-spacing:-0.3px">0</div><div style="position:absolute;font-size:15px;line-height:17px;white-space:nowrap;left:641px;width:120px;text-align:right;top:640px;color:#000;letter-spacing:-0.3px">0</div><div style="position:absolute;font-size:15px;line-height:17px;white-space:nowrap;left:801px;width:120px;text-align:right;top:640px;color:#000;letter-spacing:-0.3px">0</div><div style="position:absolute;font-size:15px;line-height:17px;white-space:nowrap;left:924px;width:120px;text-align:right;top:640px;color:#000;letter-spacing:-0.3px">0</div><div style="position:absolute;font-size:15px;line-height:17px;white-space:nowrap;left:1084px;width:120px;text-align:right;top:640px;color:#000;letter-spacing:-0.3px">0</div><div style="position:absolute;font-size:15px;line-height:17px;white-space:nowrap;left:1244px;width:120px;text-align:right;top:640px;color:#000;letter-spacing:-0.3px">0</div><div style="position:absolute;font-size:15px;line-height:17px;white-space:nowrap;left:1403px;width:120px;text-align:right;top:640px;color:#000;letter-spacing:-0.3px">0</div><div style="position:absolute;font-size:15px;line-height:17px;white-space:nowrap;left:1563px;width:120px;text-align:right;top:640px;color:#000;letter-spacing:-0.3px">0</div><div style="position:absolute;font-size:15px;line-height:17px;white-space:nowrap;left:1688px;width:120px;text-align:right;top:640px;color:#000;letter-spacing:-0.3px">0</div><div style="left:40px;top:717px;width:1775px;height:2px;background:#6f9ac6"></div><div style="left:42px;top:678px;width:156px;height:39px;background:#a6bad1"></div><div style="left:200px;top:678px;width:87px;height:39px;background:#a6bad1"></div><div style="left:289px;top:678px;width:157px;height:39px;background:#a6bad1"></div><div style="left:448px;top:678px;width:158px;height:39px;background:#cccccc"></div><div style="left:608px;top:678px;width:158px;height:39px;background:#a6bad1"></div><div style="left:768px;top:678px;width:158px;height:39px;background:#cccccc"></div><div style="left:928px;top:678px;width:121px;height:39px;background:#a6bad1"></div><div style="left:1051px;top:678px;width:158px;height:39px;background:#a6bad1"></div><div style="left:1211px;top:678px;width:158px;height:39px;background:#cccccc"></div><div style="left:1371px;top:678px;width:157px;height:39px;background:#a6bad1"></div><div style="left:1530px;top:678px;width:158px;height:39px;background:#cccccc"></div><div style="left:1690px;top:678px;width:123px;height:39px;background:#a6bad1"></div><div style="position:absolute;font-size:15px;line-height:17px;white-space:nowrap;left:47px;top:681px;color:#0563c8;text-decoration:underline;letter-spacing:-0.17px">25B) CVT Operation -<br>CHIPRA</div><div style="position:absolute;font-size:15px;line-height:17px;white-space:nowrap;left:162px;width:120px;text-align:right;top:689px;color:#000;letter-spacing:-0.3px">75</div><div style="position:absolute;font-size:15px;line-height:17px;white-space:nowrap;left:321px;width:120px;text-align:right;top:689px;color:#000;letter-spacing:-0.3px">0</div><div style="position:absolute;font-size:15px;line-height:17px;white-space:nowrap;left:481px;width:120px;text-align:right;top:689px;color:#000;letter-spacing:-0.3px">0</div><div style="position:absolute;font-size:15px;line-height:17px;white-space:nowrap;left:641px;width:120px;text-align:right;top:689px;color:#000;letter-spacing:-0.3px">0</div><div style="position:absolute;font-size:15px;line-height:17px;white-space:nowrap;left:801px;width:120px;text-align:right;top:689px;color:#000;letter-spacing:-0.3px">0</div><div style="position:absolute;font-size:15px;line-height:17px;white-space:nowrap;left:924px;width:120px;text-align:right;top:689px;color:#000;letter-spacing:-0.3px">0</div><div style="position:absolute;font-size:15px;line-height:17px;white-space:nowrap;left:1084px;width:120px;text-align:right;top:689px;color:#000;letter-spacing:-0.3px">0</div><div style="position:absolute;font-size:15px;line-height:17px;white-space:nowrap;left:1244px;width:120px;text-align:right;top:689px;color:#000;letter-spacing:-0.3px">0</div><div style="position:absolute;font-size:15px;line-height:17px;white-space:nowrap;left:1403px;width:120px;text-align:right;top:689px;color:#000;letter-spacing:-0.3px">0</div><div style="position:absolute;font-size:15px;line-height:17px;white-space:nowrap;left:1563px;width:120px;text-align:right;top:689px;color:#000;letter-spacing:-0.3px">0</div><div style="position:absolute;font-size:15px;line-height:17px;white-space:nowrap;left:1688px;width:120px;text-align:right;top:689px;color:#000;letter-spacing:-0.3px">0</div><div style="left:40px;top:792px;width:1775px;height:2px;background:#6f9ac6"></div><div style="position:absolute;font-size:15px;line-height:17px;white-space:nowrap;left:47px;top:722px;color:#0563c8;text-decoration:underline;letter-spacing:-0.17px">26) Planning for<br>Health Homes for<br>Enrollees with Chronic<br>Conditions</div><div style="position:absolute;font-size:15px;line-height:17px;white-space:nowrap;left:162px;width:120px;text-align:right;top:747px;color:#000;letter-spacing:-0.3px"></div><div style="position:absolute;font-size:15px;line-height:17px;white-space:nowrap;left:321px;width:120px;text-align:right;top:747px;color:#000;letter-spacing:-0.3px">0</div><div style="position:absolute;font-size:15px;line-height:17px;white-space:nowrap;left:481px;width:120px;text-align:right;top:747px;color:#000;letter-spacing:-0.3px">0</div><div style="position:absolute;font-size:15px;line-height:17px;white-space:nowrap;left:641px;width:120px;text-align:right;top:747px;color:#000;letter-spacing:-0.3px">136</div><div style="position:absolute;font-size:15px;line-height:17px;white-space:nowrap;left:801px;width:120px;text-align:right;top:747px;color:#000;letter-spacing:-0.3px">0</div><div style="position:absolute;font-size:15px;line-height:17px;white-space:nowrap;left:924px;width:120px;text-align:right;top:747px;color:#000;letter-spacing:-0.3px">0</div><div style="position:absolute;font-size:15px;line-height:17px;white-space:nowrap;left:1084px;width:120px;text-align:right;top:747px;color:#000;letter-spacing:-0.3px">0</div><div style="position:absolute;font-size:15px;line-height:17px;white-space:nowrap;left:1244px;width:120px;text-align:right;top:747px;color:#000;letter-spacing:-0.3px">0</div><div style="position:absolute;font-size:15px;line-height:17px;white-space:nowrap;left:1403px;width:120px;text-align:right;top:747px;color:#000;letter-spacing:-0.3px">378</div><div style="position:absolute;font-size:15px;line-height:17px;white-space:nowrap;left:1563px;width:120px;text-align:right;top:747px;color:#000;letter-spacing:-0.3px">0</div><div style="position:absolute;font-size:15px;line-height:17px;white-space:nowrap;left:1688px;width:120px;text-align:right;top:747px;color:#000;letter-spacing:-0.3px">0</div><div style="left:40px;top:850px;width:1775px;height:2px;background:#6f9ac6"></div><div style="left:42px;top:794px;width:156px;height:56px;background:#a6bad1"></div><div style="left:200px;top:794px;width:87px;height:56px;background:#a6bad1"></div><div style="left:289px;top:794px;width:157px;height:56px;background:#a6bad1"></div><div style="left:448px;top:794px;width:158px;height:56px;background:#cccccc"></div><div style="left:608px;top:794px;width:158px;height:56px;background:#a6bad1"></div><div style="left:768px;top:794px;width:158px;height:56px;background:#cccccc"></div><div style="left:928px;top:794px;width:121px;height:56px;background:#a6bad1"></div><div style="left:1051px;top:794px;width:158px;height:56px;background:#a6bad1"></div><div style="left:1211px;top:794px;width:158px;height:56px;background:#cccccc"></div><div style="left:1371px;top:794px;width:157px;height:56px;background:#a6bad1"></div><div style="left:1530px;top:794px;width:158px;height:56px;background:#cccccc"></div><div style="left:1690px;top:794px;width:123px;height:56px;background:#a6bad1"></div><div style="position:absolute;font-size:15px;line-height:17px;white-space:nowrap;left:47px;top:797px;color:#0563c8;text-decoration:underline;letter-spacing:-0.17px">27) Recovery Audit<br>Contractors State<br>Administration</div><div style="position:absolute;font-size:15px;line-height:17px;white-space:nowrap;left:162px;width:120px;text-align:right;top:814px;color:#000;letter-spacing:-0.3px">50</div><div style="position:absolute;font-size:15px;line-height:17px;white-space:nowrap;left:321px;width:120px;text-align:right;top:814px;color:#000;letter-spacing:-0.3px">0</div><div style="position:absolute;font-size:15px;line-height:17px;white-space:nowrap;left:481px;width:120px;text-align:right;top:814px;color:#000;letter-spacing:-0.3px">0</div><div style="position:absolute;font-size:15px;line-height:17px;white-space:nowrap;left:641px;width:120px;text-align:right;top:814px;color:#000;letter-spacing:-0.3px">0</div><div style="position:absolute;font-size:15px;line-height:17px;white-space:nowrap;left:801px;width:120px;text-align:right;top:814px;color:#000;letter-spacing:-0.3px">0</div><div style="position:absolute;font-size:15px;line-height:17px;white-space:nowrap;left:924px;width:120px;text-align:right;top:814px;color:#000;letter-spacing:-0.3px">0</div><div style="position:absolute;font-size:15px;line-height:17px;white-space:nowrap;left:1084px;width:120px;text-align:right;top:814px;color:#000;letter-spacing:-0.3px">0</div><div style="position:absolute;font-size:15px;line-height:17px;white-space:nowrap;left:1244px;width:120px;text-align:right;top:814px;color:#000;letter-spacing:-0.3px">0</div><div style="position:absolute;font-size:15px;line-height:17px;white-space:nowrap;left:1403px;width:120px;text-align:right;top:814px;color:#000;letter-spacing:-0.3px">0</div><div style="position:absolute;font-size:15px;line-height:17px;white-space:nowrap;left:1563px;width:120px;text-align:right;top:814px;color:#000;letter-spacing:-0.3px">0</div><div style="position:absolute;font-size:15px;line-height:17px;white-space:nowrap;left:1688px;width:120px;text-align:right;top:814px;color:#000;letter-spacing:-0.3px">0</div><div style="left:40px;top:942px;width:1775px;height:2px;background:#6f9ac6"></div><div style="left:448px;top:852px;width:158px;height:90px;background:#cccccc"></div><div style="left:768px;top:852px;width:158px;height:90px;background:#cccccc"></div><div style="left:1211px;top:852px;width:158px;height:90px;background:#cccccc"></div><div style="left:1530px;top:852px;width:158px;height:90px;background:#cccccc"></div><div style="position:absolute;font-size:15px;line-height:17px;white-space:nowrap;left:47px;top:855px;color:#0563c8;text-decoration:underline;letter-spacing:-0.17px">28A) Design<br>Development/Installatio<br>of Medicaid Elig.<br>and Enrollment<br>Systems</div><div style="position:absolute;font-size:15px;line-height:17px;white-space:nowrap;left:162px;width:120px;text-align:right;top:889px;color:#000;letter-spacing:-0.3px">90</div><div style="position:absolute;font-size:15px;line-height:17px;white-space:nowrap;left:321px;width:120px;text-align:right;top:889px;color:#000;letter-spacing:-0.3px">211</div><div style="position:absolute;font-size:15px;line-height:17px;white-space:nowrap;left:481px;width:120px;text-align:right;top:889px;color:#000;letter-spacing:-0.3px">190</div><div style="position:absolute;font-size:15px;line-height:17px;white-space:nowrap;left:641px;width:120px;text-align:right;top:889px;color:#000;letter-spacing:-0.3px">7,605</div><div style="position:absolute;font-size:15px;line-height:17px;white-space:nowrap;left:801px;width:120px;text-align:right;top:889px;color:#000;letter-spacing:-0.3px">6,845</div><div style="position:absolute;font-size:15px;line-height:17px;white-space:nowrap;left:924px;width:120px;text-align:right;top:889px;color:#000;letter-spacing:-0.3px">2</div><div style="position:absolute;font-size:15px;line-height:17px;white-space:nowrap;left:1084px;width:120px;text-align:right;top:889px;color:#000;letter-spacing:-0.3px">211</div><div style="position:absolute;font-size:15px;line-height:17px;white-space:nowrap;left:1244px;width:120px;text-align:right;top:889px;color:#000;letter-spacing:-0.3px">190</div><div style="position:absolute;font-size:15px;line-height:17px;white-space:nowrap;left:1403px;width:120px;text-align:right;top:889px;color:#000;letter-spacing:-0.3px">751</div><div style="position:absolute;font-size:15px;line-height:17px;white-space:nowrap;left:1563px;width:120px;text-align:right;top:889px;color:#000;letter-spacing:-0.3px">676</div><div style="position:absolute;font-size:15px;line-height:17px;white-space:nowrap;left:1688px;width:120px;text-align:right;top:889px;color:#000;letter-spacing:-0.3px">2</div><div style="left:40px;top:382px;width:2px;height:21px;background:#6f9ac6"></div><div style="left:198px;top:382px;width:2px;height:21px;background:#6f9ac6"></div><div style="left:287px;top:382px;width:2px;height:21px;background:#6f9ac6"></div><div style="left:446px;top:382px;width:2px;height:21px;background:#6f9ac6"></div><div style="left:606px;top:382px;width:2px;height:21px;background:#6f9ac6"></div><div style="left:766px;top:382px;width:2px;height:21px;background:#6f9ac6"></div><div style="left:926px;top:382px;width:2px;height:21px;background:#6f9ac6"></div><div style="left:1049px;top:382px;width:2px;height:21px;background:#6f9ac6"></div><div style="left:1209px;top:382px;width:2px;height:21px;background:#6f9ac6"></div><div style="left:1369px;top:382px;width:2px;height:21px;background:#6f9ac6"></div><div style="left:1528px;top:382px;width:2px;height:21px;background:#6f9ac6"></div><div style="left:1688px;top:382px;width:2px;height:21px;background:#6f9ac6"></div><div style="left:1813px;top:382px;width:2px;height:21px;background:#6f9ac6"></div><div style="left:40px;top:405px;width:2px;height:73px;background:#6f9ac6"></div><div style="left:198px;top:405px;width:2px;height:73px;background:#6f9ac6"></div><div style="left:287px;top:405px;width:2px;height:73px;background:#6f9ac6"></div><div style="left:446px;top:405px;width:2px;height:73px;background:#6f9ac6"></div><div style="left:606px;top:405px;width:2px;height:73px;background:#6f9ac6"></div><div style="left:766px;top:405px;width:2px;height:73px;background:#6f9ac6"></div><div style="left:926px;top:405px;width:2px;height:73px;background:#6f9ac6"></div><div style="left:1049px;top:405px;width:2px;height:73px;background:#6f9ac6"></div><div style="left:1209px;top:405px;width:2px;height:73px;background:#6f9ac6"></div><div style="left:1369px;top:405px;width:2px;height:73px;background:#6f9ac6"></div><div style="left:1528px;top:405px;width:2px;height:73px;background:#6f9ac6"></div><div style="left:1688px;top:405px;width:2px;height:73px;background:#6f9ac6"></div><div style="left:1813px;top:405px;width:2px;height:73px;background:#6f9ac6"></div><div style="left:40px;top:480px;width:2px;height:56px;background:#6f9ac6"></div><div style="left:198px;top:480px;width:2px;height:56px;background:#6f9ac6"></div><div style="left:287px;top:480px;width:2px;height:56px;background:#6f9ac6"></div><div style="left:446px;top:480px;width:2px;height:56px;background:#6f9ac6"></div><div style="left:606px;top:480px;width:2px;height:56px;background:#6f9ac6"></div><div style="left:766px;top:480px;width:2px;height:56px;background:#6f9ac6"></div><div style="left:926px;top:480px;width:2px;height:56px;background:#6f9ac6"></div><div style="left:1049px;top:480px;width:2px;height:56px;background:#6f9ac6"></div><div style="left:1209px;top:480px;width:2px;height:56px;background:#6f9ac6"></div><div style="left:1369px;top:480px;width:2px;height:56px;background:#6f9ac6"></div><div style="left:1528px;top:480px;width:2px;height:56px;background:#6f9ac6"></div><div style="left:1688px;top:480px;width:2px;height:56px;background:#6f9ac6"></div><div style="left:1813px;top:480px;width:2px;height:56px;background:#6f9ac6"></div><div style="left:40px;top:538px;width:2px;height:56px;background:#6f9ac6"></div><div style="left:198px;top:538px;width:2px;height:56px;background:#6f9ac6"></div><div style="left:287px;top:538px;width:2px;height:56px;background:#6f9ac6"></div><div style="left:446px;top:538px;width:2px;height:56px;background:#6f9ac6"></div><div style="left:606px;top:538px;width:2px;height:56px;background:#6f9ac6"></div><div style="left:766px;top:538px;width:2px;height:56px;background:#6f9ac6"></div><div style="left:926px;top:538px;width:2px;height:56px;background:#6f9ac6"></div><div style="left:1049px;top:538px;width:2px;height:56px;background:#6f9ac6"></div><div style="left:1209px;top:538px;width:2px;height:56px;background:#6f9ac6"></div><div style="left:1369px;top:538px;width:2px;height:56px;background:#6f9ac6"></div><div style="left:1528px;top:538px;width:2px;height:56px;background:#6f9ac6"></div><div style="left:1688px;top:538px;width:2px;height:56px;background:#6f9ac6"></div><div style="left:1813px;top:538px;width:2px;height:56px;background:#6f9ac6"></div><div style="left:40px;top:596px;width:2px;height:22px;background:#6f9ac6"></div><div style="left:1813px;top:596px;width:2px;height:22px;background:#6f9ac6"></div><div style="left:40px;top:620px;width:2px;height:56px;background:#6f9ac6"></div><div style="left:198px;top:620px;width:2px;height:56px;background:#6f9ac6"></div><div style="left:287px;top:620px;width:2px;height:56px;background:#6f9ac6"></div><div style="left:446px;top:620px;width:2px;height:56px;background:#6f9ac6"></div><div style="left:606px;top:620px;width:2px;height:56px;background:#6f9ac6"></div><div style="left:766px;top:620px;width:2px;height:56px;background:#6f9ac6"></div><div style="left:926px;top:620px;width:2px;height:56px;background:#6f9ac6"></div><div style="left:1049px;top:620px;width:2px;height:56px;background:#6f9ac6"></div><div style="left:1209px;top:620px;width:2px;height:56px;background:#6f9ac6"></div><div style="left:1369px;top:620px;width:2px;height:56px;background:#6f9ac6"></div><div style="left:1528px;top:620px;width:2px;height:56px;background:#6f9ac6"></div><div style="left:1688px;top:620px;width:2px;height:56px;background:#6f9ac6"></div><div style="left:1813px;top:620px;width:2px;height:56px;background:#6f9ac6"></div><div style="left:40px;top:678px;width:2px;height:39px;background:#6f9ac6"></div><div style="left:198px;top:678px;width:2px;height:39px;background:#6f9ac6"></div><div style="left:287px;top:678px;width:2px;height:39px;background:#6f9ac6"></div><div style="left:446px;top:678px;width:2px;height:39px;background:#6f9ac6"></div><div style="left:606px;top:678px;width:2px;height:39px;background:#6f9ac6"></div><div style="left:766px;top:678px;width:2px;height:39px;background:#6f9ac6"></div><div style="left:926px;top:678px;width:2px;height:39px;background:#6f9ac6"></div><div style="left:1049px;top:678px;width:2px;height:39px;background:#6f9ac6"></div><div style="left:1209px;top:678px;width:2px;height:39px;background:#6f9ac6"></div><div style="left:1369px;top:678px;width:2px;height:39px;background:#6f9ac6"></div><div style="left:1528px;top:678px;width:2px;height:39px;background:#6f9ac6"></div><div style="left:1688px;top:678px;width:2px;height:39px;background:#6f9ac6"></div><div style="left:1813px;top:678px;width:2px;height:39px;background:#6f9ac6"></div><div style="left:40px;top:719px;width:2px;height:73px;background:#6f9ac6"></div><div style="left:198px;top:719px;width:2px;height:73px;background:#6f9ac6"></div><div style="left:287px;top:719px;width:2px;height:73px;background:#6f9ac6"></div><div style="left:446px;top:719px;width:2px;height:73px;background:#6f9ac6"></div><div style="left:606px;top:719px;width:2px;height:73px;background:#6f9ac6"></div><div style="left:766px;top:719px;width:2px;height:73px;background:#6f9ac6"></div><div style="left:926px;top:719px;width:2px;height:73px;background:#6f9ac6"></div><div style="left:1049px;top:719px;width:2px;height:73px;background:#6f9ac6"></div><div style="left:1209px;top:719px;width:2px;height:73px;background:#6f9ac6"></div><div style="left:1369px;top:719px;width:2px;height:73px;background:#6f9ac6"></div><div style="left:1528px;top:719px;width:2px;height:73px;background:#6f9ac6"></div><div style="left:1688px;top:719px;width:2px;height:73px;background:#6f9ac6"></div><div style="left:1813px;top:719px;width:2px;height:73px;background:#6f9ac6"></div><div style="left:40px;top:794px;width:2px;height:56px;background:#6f9ac6"></div><div style="left:198px;top:794px;width:2px;height:56px;background:#6f9ac6"></div><div style="left:287px;top:794px;width:2px;height:56px;background:#6f9ac6"></div><div style="left:446px;top:794px;width:2px;height:56px;background:#6f9ac6"></div><div style="left:606px;top:794px;width:2px;height:56px;background:#6f9ac6"></div><div style="left:766px;top:794px;width:2px;height:56px;background:#6f9ac6"></div><div style="left:926px;top:794px;width:2px;height:56px;background:#6f9ac6"></div><div style="left:1049px;top:794px;width:2px;height:56px;background:#6f9ac6"></div><div style="left:1209px;top:794px;width:2px;height:56px;background:#6f9ac6"></div><div style="left:1369px;top:794px;width:2px;height:56px;background:#6f9ac6"></div><div style="left:1528px;top:794px;width:2px;height:56px;background:#6f9ac6"></div><div style="left:1688px;top:794px;width:2px;height:56px;background:#6f9ac6"></div><div style="left:1813px;top:794px;width:2px;height:56px;background:#6f9ac6"></div><div style="left:40px;top:852px;width:2px;height:90px;background:#6f9ac6"></div><div style="left:198px;top:852px;width:2px;height:90px;background:#6f9ac6"></div><div style="left:287px;top:852px;width:2px;height:90px;background:#6f9ac6"></div><div style="left:446px;top:852px;width:2px;height:90px;background:#6f9ac6"></div><div style="left:606px;top:852px;width:2px;height:90px;background:#6f9ac6"></div><div style="left:766px;top:852px;width:2px;height:90px;background:#6f9ac6"></div><div style="left:926px;top:852px;width:2px;height:90px;background:#6f9ac6"></div><div style="left:1049px;top:852px;width:2px;height:90px;background:#6f9ac6"></div><div style="left:1209px;top:852px;width:2px;height:90px;background:#6f9ac6"></div><div style="left:1369px;top:852px;width:2px;height:90px;background:#6f9ac6"></div><div style="left:1528px;top:852px;width:2px;height:90px;background:#6f9ac6"></div><div style="left:1688px;top:852px;width:2px;height:90px;background:#6f9ac6"></div><div style="left:1813px;top:852px;width:2px;height:90px;background:#6f9ac6"></div></div></div><div style="left:1816px;top:382px;width:19px;height:524px;background:linear-gradient(90deg,#e6e6e6,#f2f2f2 40%,#efefef);"></div><div style="position:absolute;left:1821px;top:390px;width:0;height:0;border-left:4px solid transparent;border-right:4px solid transparent;border-bottom:5px solid #333"></div><div style="position:absolute;left:1821px;top:893px;width:0;height:0;border-left:4px solid transparent;border-right:4px solid transparent;border-top:5px solid #333"></div><div style="left:1816px;top:651px;width:19px;height:85px;background:linear-gradient(90deg,#f6f6f6 0,#ededed 38%,#dcdcdc 42%,#d0d0d0 100%);border:1px solid #a9a9a9;border-radius:2px;box-sizing:border-box;"><div style="position:absolute;left:6px;top:37px;width:6px;height:1px;background:#666;box-shadow:0 2px 0 #666,0 4px 0 #666"></div></div><div style="position:absolute;top:924px;height:24px;border:1px solid #707070;border-radius:3px;box-sizing:border-box;background:linear-gradient(180deg,#f3f3f3 0,#ebebeb 50%,#dddddd 51%,#cfcfcf 100%);font-size:15px;line-height:21px;text-align:center;color:#000;letter-spacing:-0.2px;left:855px;width:63px">Return</div><div style="position:absolute;top:924px;height:24px;border:1px solid #707070;border-radius:3px;box-sizing:border-box;background:linear-gradient(180deg,#f3f3f3 0,#ebebeb 50%,#dddddd 51%,#cfcfcf 100%);font-size:15px;line-height:21px;text-align:center;color:#000;letter-spacing:-0.2px;left:924px;width:43px">Print</div><div style="position:absolute;top:924px;height:24px;border:1px solid #707070;border-radius:3px;box-sizing:border-box;background:linear-gradient(180deg,#f3f3f3 0,#ebebeb 50%,#dddddd 51%,#cfcfcf 100%);font-size:15px;line-height:21px;text-align:center;color:#000;letter-spacing:-0.2px;left:973px;width:51px">Excel</div><div style="position:absolute;left:520px;top:586px;width:108px;height:20px;background:linear-gradient(180deg,#ffffff,#e4e5f0);border:1px solid #767676;border-radius:2px;box-sizing:border-box;box-shadow:2px 2px 2px rgba(0,0,0,.35);font-size:11px;line-height:18px;color:#575757;padding-left:4px;white-space:nowrap">2014 Federal Share</div>
</body></html>
